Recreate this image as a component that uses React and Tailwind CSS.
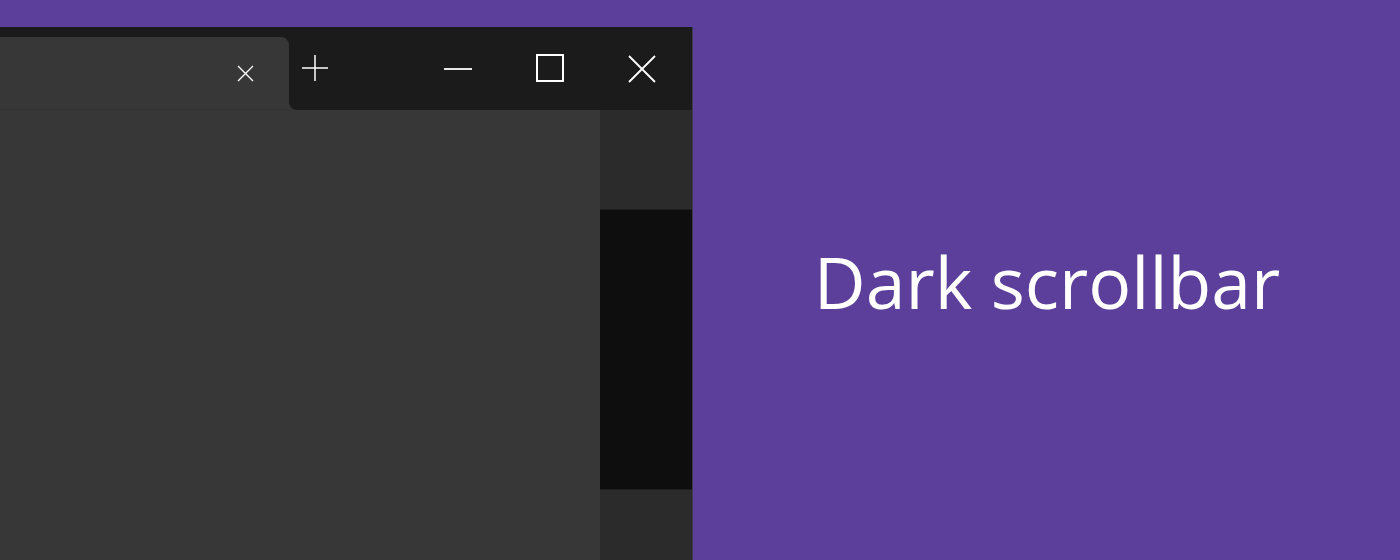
import React from "react";

function Glyph({ children, className = "" }) {
  return (
    <svg className={className} fill="none" stroke="white" strokeWidth="1.6" strokeLinecap="butt">
      {children}
    </svg>
  );
}

export default function App() {
  return (
    <div className="w-[1400px] h-[560px] bg-[#5c3f9a] flex overflow-hidden" style={{ fontFamily: '"Open Sans", sans-serif' }}>
      {/* browser window */}
      <div className="pt-[27px] w-[693px] flex-none">
        <div className="h-full flex flex-col border-r border-[#40394f]">
          {/* title bar */}
          <div className="h-[83px] flex flex-none">
            <div className="w-[289px] bg-[#1b1b1b] pt-[10px] flex flex-col">
              <div className="flex-1 bg-[#373737] rounded-tr-[8px] flex items-center justify-end pr-[35px] border-b border-[#323232]">
                <Glyph className="w-[17px] h-[17px] mt-[1px]">
                  <path d="M1 1 L16 16 M16 1 L1 16" strokeWidth="1.4" />
                </Glyph>
              </div>
            </div>
            <div className="flex-1 bg-[#373737]">
              <div className="h-full bg-[#1b1b1b] rounded-bl-[8px] flex items-start pt-[28px]">
                <Glyph className="w-[26px] h-[26px] ml-[13px] mt-[0px]">
                  <path d="M13 0 V26 M0 13 H26" strokeWidth="1.5" />
                </Glyph>
                <Glyph className="w-[28px] h-[28px] ml-[116px]">
                  <path d="M0 14 H28" strokeWidth="1.8" />
                </Glyph>
                <Glyph className="w-[28px] h-[28px] ml-[64px] -mt-[1px]">
                  <rect x="1" y="1" width="26" height="26" strokeWidth="2" />
                </Glyph>
                <Glyph className="w-[28px] h-[28px] ml-[64px]">
                  <path d="M1 1 L27 27 M27 1 L1 27" strokeWidth="1.8" />
                </Glyph>
              </div>
            </div>
          </div>
          {/* page + scrollbar */}
          <div className="flex-1 flex">
            <div className="w-[600px] bg-[#373737]" />
            <div className="flex-1 bg-[#2b2b2b] pt-[99px]">
              <div className="h-[281px] bg-[#0e0e0e] border-y border-[#1f1f1f]" />
            </div>
          </div>
        </div>
      </div>
      {/* caption */}
      <div className="flex-1 flex items-center justify-center pt-[4px]">
        <span className="text-white text-[71.5px] leading-none pl-[1px]">Dark scrollbar</span>
      </div>
    </div>
  );
}
